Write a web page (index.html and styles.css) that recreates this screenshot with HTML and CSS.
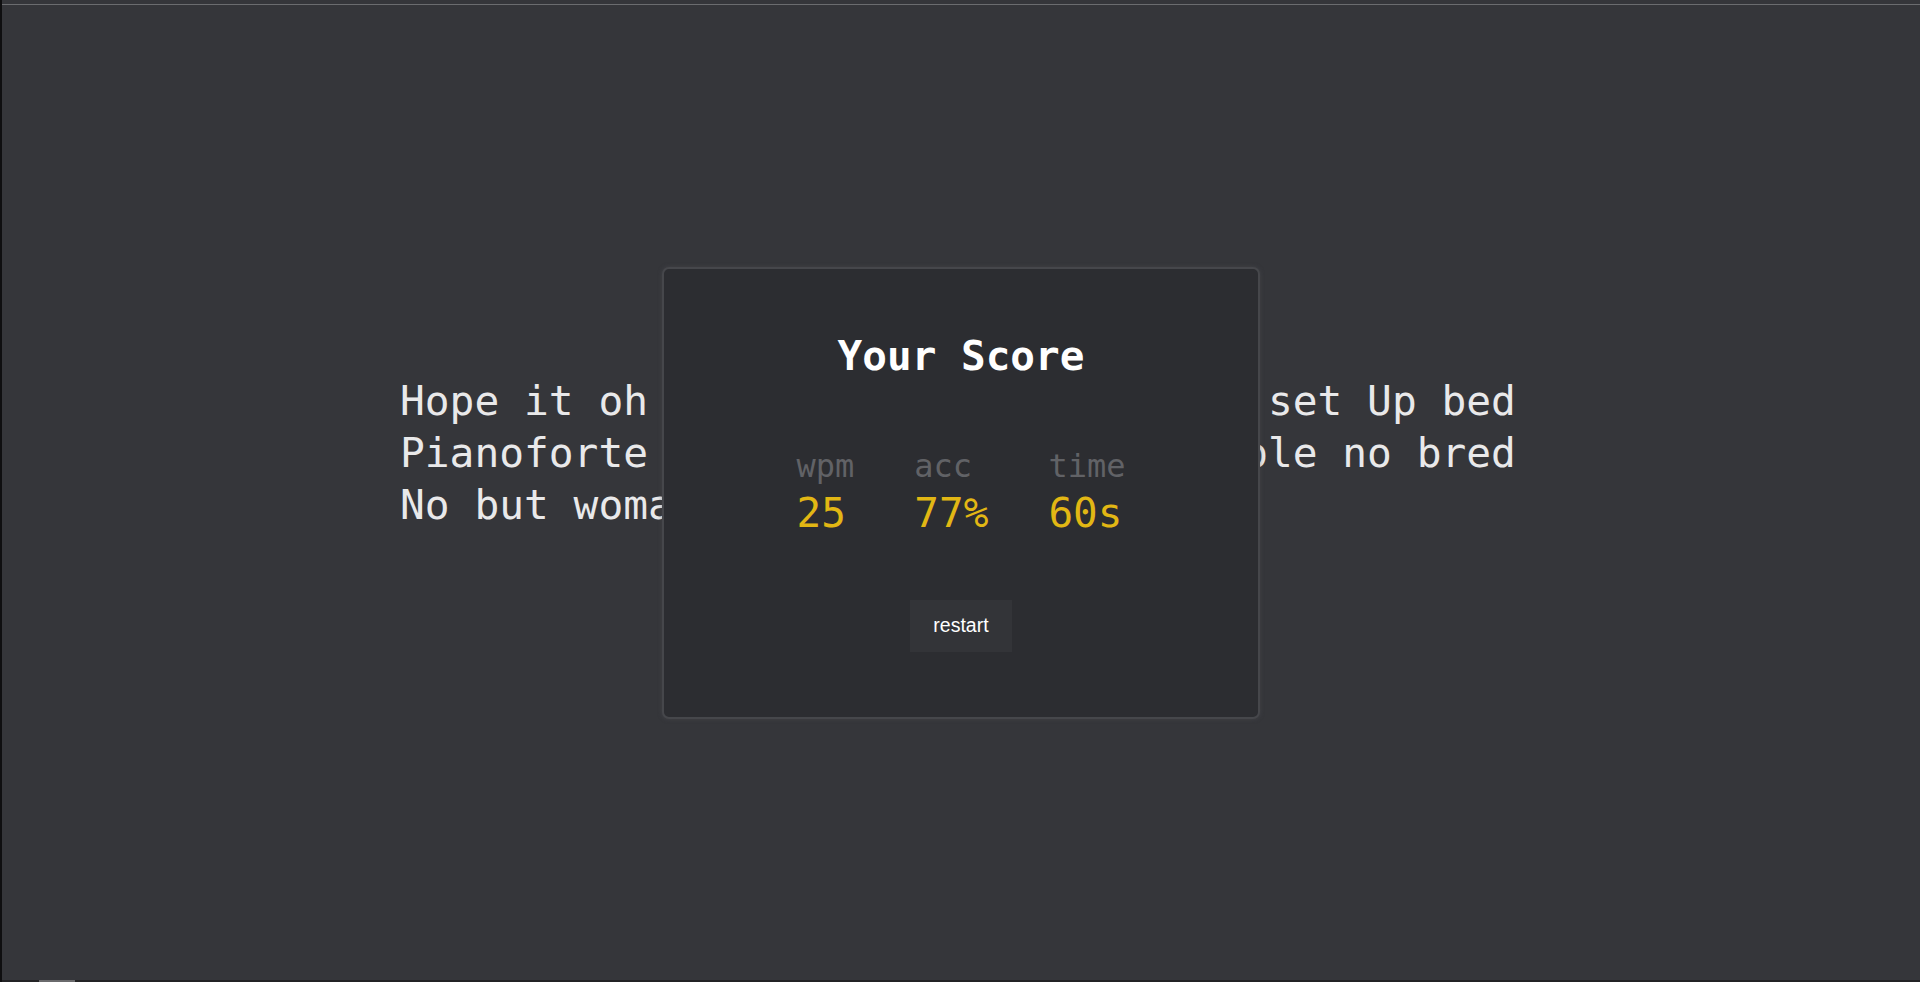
FILE: index.html
```html
<!DOCTYPE html>
<html lang="en">
<head>
<meta charset="utf-8">
<title>Typing test</title>
<link rel="stylesheet" href="styles.css">
</head>
<body>
<div class="frame">
  <div class="edge"></div>
  <div class="main">
    <div class="topline"></div>
    <div class="stage">
      <div class="words">
        <div class="line">Hope it oh fence also on name hear set Up bed</div>
        <div class="line">Pianoforte at lady ye cold impossible no bred</div>
        <div class="line">No but woman he went as sing</div>
      </div>
      <div class="modal">
        <h1 class="title">Your Score</h1>
        <div class="stats">
          <div class="stat">
            <span class="label">wpm</span>
            <span class="value">25</span>
          </div>
          <div class="stat">
            <span class="label">acc</span>
            <span class="value">77%</span>
          </div>
          <div class="stat">
            <span class="label">time</span>
            <span class="value">60s</span>
          </div>
        </div>
        <button class="restart" type="button">restart</button>
      </div>
    </div>
    <div class="hscroll"><div class="thumb"></div></div>
  </div>
</div>
</body>
</html>
```
FILE: styles.css
```css
* { box-sizing: border-box; }
html, body {
  margin: 0;
  padding: 0;
  height: 100%;
  overflow: hidden;
  background: #35363a;
}
.frame {
  display: flex;
  height: 982px;
}
.edge {
  width: 2px;
  background: #0f0f10;
  flex: none;
}
.main {
  flex: 1;
  display: flex;
  flex-direction: column;
}
.topline {
  margin-top: 4px;
  height: 1px;
  background: #6b6c6f;
  flex: none;
}
.stage {
  flex: 1;
  position: relative;
  padding-top: 370px;
}
.words {
  width: 1122px;
  margin: 0 auto;
  font-family: "DejaVu Sans Mono", monospace;
  font-size: 41.2px;
  line-height: 52px;
  color: #e9e9ea;
}
.line { white-space: pre; }
.modal {
  position: absolute;
  left: 50%;
  top: 50%;
  transform: translate(-50%, -50%);
  width: 598px;
  background: #2c2d31;
  border: 2px solid #46474b;
  border-radius: 7px;
  box-shadow: 0 0 4px rgba(80, 80, 86, 0.5);
  padding: 63px 0 65px;
  display: flex;
  flex-direction: column;
  align-items: center;
  font-family: "DejaVu Sans Mono", monospace;
}
.title {
  margin: 0;
  font-size: 41px;
  line-height: 48px;
  font-weight: bold;
  color: #ffffff;
}
.stats {
  margin-top: 68px;
  display: flex;
  gap: 60px;
}
.stat {
  display: flex;
  flex-direction: column;
  align-items: flex-start;
}
.label {
  font-size: 32px;
  line-height: 36px;
  color: #616266;
}
.value {
  margin-top: 7px;
  font-size: 41px;
  line-height: 44px;
  color: #e2b714;
}
.restart {
  margin-top: 65px;
  width: 102px;
  height: 52px;
  border: none;
  background: #333438;
  color: #ffffff;
  font-family: "Liberation Sans", Arial, sans-serif;
  font-size: 19.5px;
  padding: 0;
  cursor: pointer;
}
.hscroll {
  height: 2px;
  background: #232325;
  flex: none;
  position: relative;
}
.thumb {
  margin-left: 37px;
  width: 36px;
  height: 2px;
  background: #6a6a6c;
}
```
